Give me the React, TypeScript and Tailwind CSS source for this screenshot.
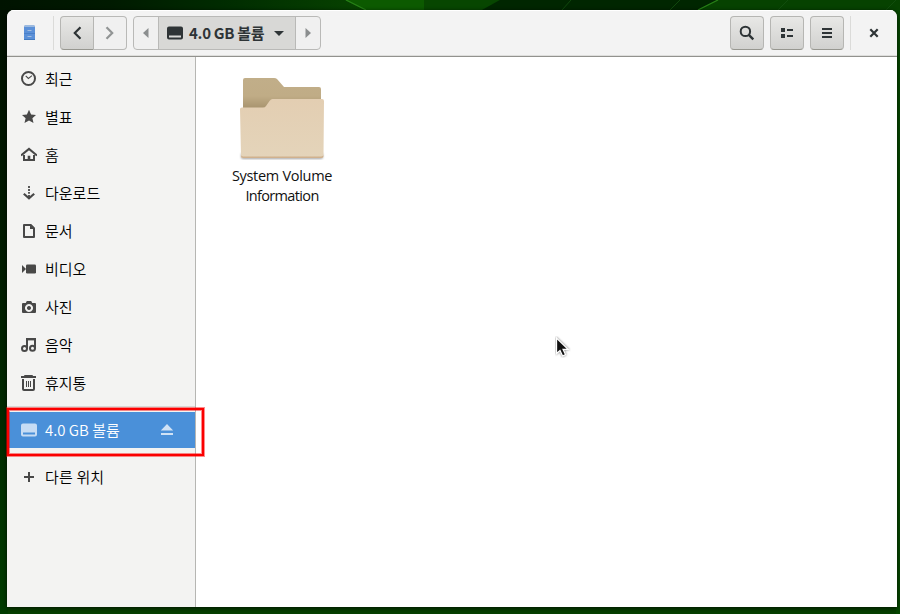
import type { ReactNode } from "react";

const INK = "#2e3436";

function Icon({ children, className = "" }: { children: ReactNode; className?: string }) {
  return (
    <svg width="16" height="16" viewBox="0 0 16 16" fill="currentColor" className={"block shrink-0 " + className}>
      {children}
    </svg>
  );
}

const places: { label: string; icon: ReactNode }[] = [
  {
    label: "최근",
    icon: (
      <>
        <circle cx="7.5" cy="7.5" r="6.5" fill="none" stroke="currentColor" strokeWidth="2" />
        <path d="M4.7 4.8 7.4 7.4 11 4.6" fill="none" stroke="currentColor" strokeWidth="1.1" />
      </>
    ),
  },
  { label: "별표", icon: <path d="M8 .8 10.1 5.4 15 5.9 11.4 9.2 12.5 14 8 11.6 3.5 14 4.6 9.2 1 5.9 5.9 5.4Z" /> },
  {
    label: "홈",
    icon: (
      <>
        <path d="M.8 7.8 8 1.9 15.2 7.8" fill="none" stroke="currentColor" strokeWidth="2" strokeLinecap="square" />
        <path d="M2 8h2v4h2.7V8.8h2.6V12H12V8h2v6H2Z" />
      </>
    ),
  },
  {
    label: "다운로드",
    icon: (
      <>
        <path d="M7.1 1h1.8v2H7.1zM7.1 4h1.8v2H7.1zM7.1 7h1.8v1.8H7.1zM7.1 10h1.8v3H7.1z" />
        <path d="M2.8 8.8 8 13.4 13.2 8.8" fill="none" stroke="currentColor" strokeWidth="2.2" />
      </>
    ),
  },
  {
    label: "문서",
    icon: (
      <>
        <path d="M3 2H9.8L13 5.2V14H3Z" fill="none" stroke="currentColor" strokeWidth="2" strokeLinejoin="round" />
        <path d="M9 2v4h4Z" />
      </>
    ),
  },
  {
    label: "비디오",
    icon: (
      <>
        <path d="M1 4 5 8 1 12Z" />
        <rect x="5" y="3.5" width="10" height="9" rx="1.3" />
      </>
    ),
  },
  {
    label: "사진",
    icon: (
      <path
        fillRule="evenodd"
        d="M5.8 2h4.4l1 2H14q1 0 1 1v8q0 1-1 1H2q-1 0-1-1V5q0-1 1-1h2.8ZM8 5a4 4 0 1 0 .01 0ZM8 7a2 2 0 1 1-.01 0Z"
      />
    ),
  },
  {
    label: "음악",
    icon: (
      <>
        <circle cx="3.5" cy="11.5" r="2.5" fill="none" stroke="currentColor" strokeWidth="2" />
        <circle cx="11.5" cy="11.2" r="2.5" fill="none" stroke="currentColor" strokeWidth="2" />
        <path d="M6 11.5V2H14V11.5" fill="none" stroke="currentColor" strokeWidth="2" />
        <path d="M6 3h8v1H6z" opacity=".4" />
      </>
    ),
  },
  {
    label: "휴지통",
    icon: (
      <>
        <path d="M3.5 0h8l.5 1h3v2H0V1h3Z" />
        <path d="M2 4V14q0 1 1 1h9q1 0 1-1V4" fill="none" stroke="currentColor" strokeWidth="2" />
        <path d="M5.5 6v6M7.5 6v6M9.5 6v6" stroke="currentColor" />
      </>
    ),
  },
];

function Wallpaper() {
  return (
    <svg className="absolute inset-0" width="900" height="614" viewBox="0 0 900 614">
      <defs>
        <linearGradient id="top" x1="0" x2="1">
          <stop offset="0" stopColor="#001300" />
          <stop offset=".3" stopColor="#001a00" />
          <stop offset=".6" stopColor="#002b00" />
          <stop offset="1" stopColor="#074300" />
        </linearGradient>
        <linearGradient id="left" x1="0" x2="0" y1="0" y2="1">
          <stop offset="0" stopColor="#001000" />
          <stop offset=".45" stopColor="#001d00" />
          <stop offset="1" stopColor="#003c00" />
        </linearGradient>
      </defs>
      <rect width="900" height="614" fill="#063f00" />
      <rect width="366" height="12" fill="url(#top)" />
      <path d="M345 0H500L482 10H365Z" fill="#074600" />
      <path d="M345 0H424V10H365Z" fill="#0c5a00" />
      <path d="M500 0H718L698 10H482Z" fill="#002600" />
      <path d="M718 0H900V12H698Z" fill="#064200" />
      <path d="M346 0 366 10M698 10 718 0" stroke="#278016" strokeWidth="1.3" />
      <path d="M562 10 571 0M670 10 680 0M778 10 788 0M886 10 896 0" stroke="#145010" strokeWidth=".8" />
      <rect y="10" width="8" height="604" fill="url(#left)" />
      <rect x="896" y="10" width="4" height="604" fill="#064600" />
    </svg>
  );
}

const raised =
  "flex items-center justify-center border border-[#b6b6b3] border-b-[#979790] bg-gradient-to-b from-[#e8e8e6] to-[#d1d1cf]";

export default function App() {
  return (
    <div className="relative h-[614px] w-[900px] overflow-hidden font-['Noto_Sans_CJK_KR',sans-serif]">
      <Wallpaper />
      <div className="relative h-full pt-[10px] pr-[3px] pb-[7px] pl-[7px]">
        <div className="flex h-full flex-col overflow-hidden rounded-t-[7px] bg-white shadow-[0_1px_4px_rgba(0,0,0,0.7)]">
          <header
            className="flex h-[47px] shrink-0 items-start border-b border-[#92928e] bg-[#f3f3f3] pt-[6px] shadow-[inset_0_1px_#fff,inset_0_-1px_#dededc]"
            style={{ color: INK }}
          >
            <div className="flex h-[34px] w-[46px] items-center justify-center">
              <svg width="14" height="18" viewBox="0 0 14 18" className="block">
                <path d="M2 1h9l1 2v13H1V3Z" fill="#5b90d8" />
                <path d="M2 1h9l1 2H1Z" fill="#9bb9df" />
                <path d="M1 15h11v1H1Z" fill="#427abf" />
                <path d="M1 9.5h11" stroke="#4a80c8" />
                <path d="M4.5 6.5h4M4.5 12.5h4" stroke="#a5bfe0" />
              </svg>
            </div>
            <div className="h-[34px] w-px bg-[#dbdbd9]" />
            <div className="ml-[6px] flex h-[34px]">
              <div className={raised + " w-[34px] rounded-l-[4px]"}>
                <svg width="16" height="16" viewBox="0 0 16 16">
                  <path d="M11.5 2.3 5.8 8 11.5 13.7" fill="none" stroke={INK} strokeWidth="2.2" />
                </svg>
              </div>
              <div className="flex w-[33px] items-center justify-center rounded-r-[4px] border border-l-0 border-[#b9b9b7] bg-[#f0f0f0]">
                <svg width="16" height="16" viewBox="0 0 16 16">
                  <path d="M4.5 2.3 10.2 8 4.5 13.7" fill="none" stroke="#929595" strokeWidth="2.2" />
                </svg>
              </div>
            </div>
            <div className="ml-[6px] flex h-[34px] w-[188px] overflow-hidden rounded-[4px] border border-[#b9b9b7] bg-[#f0f0f0]">
              <div className="flex w-[24px] items-center justify-center">
                <svg width="6" height="10" viewBox="0 0 6 10"><path d="M5.5 0v10L0 5Z" fill="#8b8e8f" /></svg>
              </div>
              <div className="flex w-[138px] items-center border-x border-[#b9b9b7] bg-[#d8d8d6] pl-[8px]">
                <Icon>
                  <path fillRule="evenodd" d="M2 1.5h12q2 0 2 2v9q0 2-2 2H2q-2 0-2-2v-9q0-2 2-2ZM2 10.5v2h12v-2Z" />
                </Icon>
                <span className="ml-[6px] w-[76px] text-[15px] font-bold leading-5 tracking-[-0.3px] whitespace-nowrap">4.0 GB 볼륨</span>
                <svg width="10" height="5" viewBox="0 0 10 5" className="ml-[9px]"><path d="M0 0h10L5 5Z" fill={INK} /></svg>
              </div>
              <div className="flex w-[24px] items-center justify-center">
                <svg width="6" height="10" viewBox="0 0 6 10"><path d="M.5 0v10L6 5Z" fill="#8b8e8f" /></svg>
              </div>
            </div>
            <div className="ml-auto flex h-[34px] gap-[6px]">
              <div className={raised + " w-[34px] rounded-[4px]"}>
                <Icon>
                  <circle cx="6.4" cy="6.4" r="4.7" fill="none" stroke="currentColor" strokeWidth="2" />
                  <path d="m9.8 9.8 4.5 4.5" stroke="currentColor" strokeWidth="2.4" />
                </Icon>
              </div>
              <div className={raised + " w-[34px] rounded-[4px]"}>
                <Icon><path d="M2 3h4v4H2zM2 9h4v4H2zM8 4h6v2H8zM8 10h6v2H8z" /></Icon>
              </div>
              <div className={raised + " w-[34px] rounded-[4px]"}>
                <Icon><path d="M3 3h10v2H3zM3 7h10v2H3zM3 11h10v2H3z" /></Icon>
              </div>
            </div>
            <div className="ml-[6px] h-[34px] w-px bg-[#dbdbd9]" />
            <div className="flex h-[34px] w-[46px] items-center justify-center">
              <Icon><path d="m4.3 4.3 7.4 7.4M11.7 4.3 4.3 11.7" stroke="currentColor" strokeWidth="2.2" /></Icon>
            </div>
          </header>
          <div className="flex min-h-0 flex-1">
            <aside className="relative flex w-[189px] shrink-0 flex-col border-r border-[#b6b6b3] bg-[#f3f3f2] pt-[3px] text-[15px] font-[350] leading-5 text-black">
              {places.map((p) => (
                <div key={p.label} className="flex h-[38px] shrink-0 items-center pl-[14px]">
                  <Icon className="text-[#484848]">{p.icon}</Icon>
                  <span className="ml-[8px]">{p.label}</span>
                </div>
              ))}
              <div className="mt-[4px] h-px shrink-0 bg-[#d8d8d5]" />
              <div className="mt-[5px] flex h-[36px] shrink-0 items-center bg-[#4a90d9] pl-[14px] text-white">
                <Icon className="text-[#c6dcf4]">
                  <path fillRule="evenodd" d="M2 1.5h12q2 0 2 2v9q0 2-2 2H2q-2 0-2-2v-9q0-2 2-2ZM2 10.5v2h12v-2Z" />
                </Icon>
                <span className="ml-[8px] flex-1">4.0 GB 볼륨</span>
                <Icon className="mr-[20px] text-[#d0e2f5]"><path d="M8 2 14.2 8.5H1.8ZM2 11h12v2H2z" /></Icon>
              </div>
              <div className="mt-[10px] flex h-[38px] shrink-0 items-center pl-[14px]">
                <Icon className="text-[#484848]"><path d="M7 3h2v4h4v2H9v4H7V9H3V7h4z" /></Icon>
                <span className="ml-[8px] tracking-[0.15px]">다른 위치</span>
              </div>
            </aside>
            <main className="flex-1 bg-white pt-[17px] pl-[26px]">
              <div className="flex w-[120px] flex-col items-center">
                <svg width="96" height="92" viewBox="0 0 96 92" className="block">
                  <defs>
                    <linearGradient id="back" x1="0" x2="0" y1="0" y2="1">
                      <stop offset="0" stopColor="#c1ae89" />
                      <stop offset=".6" stopColor="#c0ac86" />
                      <stop offset="1" stopColor="#a8946f" />
                    </linearGradient>
                    <linearGradient id="front" x1="0" x2="0" y1="0" y2="1">
                      <stop offset="0" stopColor="#e3ceb2" />
                      <stop offset="1" stopColor="#e4d4ba" />
                    </linearGradient>
                    <filter id="soft"><feGaussianBlur stdDeviation="1" /></filter>
                  </defs>
                  <rect x="7" y="79" width="82" height="6" rx="2" fill="#000" opacity=".35" filter="url(#soft)" />
                  <path d="M9 6q0-2 2-2h29q2 0 3 1l7 8h35q2 0 2 2v19H9Z" fill="url(#back)" />
                  <path d="M6 35q0-1.5 2-1.5h21q2 0 3-1.5l3.5-5q1.5-2 3-2H88q2 0 2 2L89.5 82q0 2-2 2H9q-2 0-2-2Z" fill="url(#front)" />
                  <path d="M7 81.5q0 2.5 2 2.5h78.500q2 0 2-2.500l-2 .9H9Z" fill="#d0b18e" />
                </svg>
                <p className="w-[120px] text-center font-['Open_Sans',sans-serif] text-[14.5px] leading-5 text-[#111]">
                  <span className="block tracking-[-0.3px]">System Volume</span>
                  <span className="block tracking-[-0.65px]">Information</span>
                </p>
              </div>
            </main>
          </div>
        </div>
      </div>
      <div className="absolute top-[408px] left-[7px] h-[48px] w-[197px] border-2 border-[#fb0000] shadow-[0_0_0_1px_rgba(251,0,0,0.45),inset_0_0_0_1px_rgba(251,0,0,0.45)]" />
      <svg className="absolute top-[336px] left-[555px]" width="16" height="22" viewBox="0 0 16 22">
        <path d="M1.5 2v15.5l3.5-3 2.6 5.5 3-1.4-2.5-5.3h5Z" fill="#111" stroke="#fff" strokeWidth="1.3" style={{ filter: "drop-shadow(0 0 1px #777)" }} />
      </svg>
    </div>
  );
}
